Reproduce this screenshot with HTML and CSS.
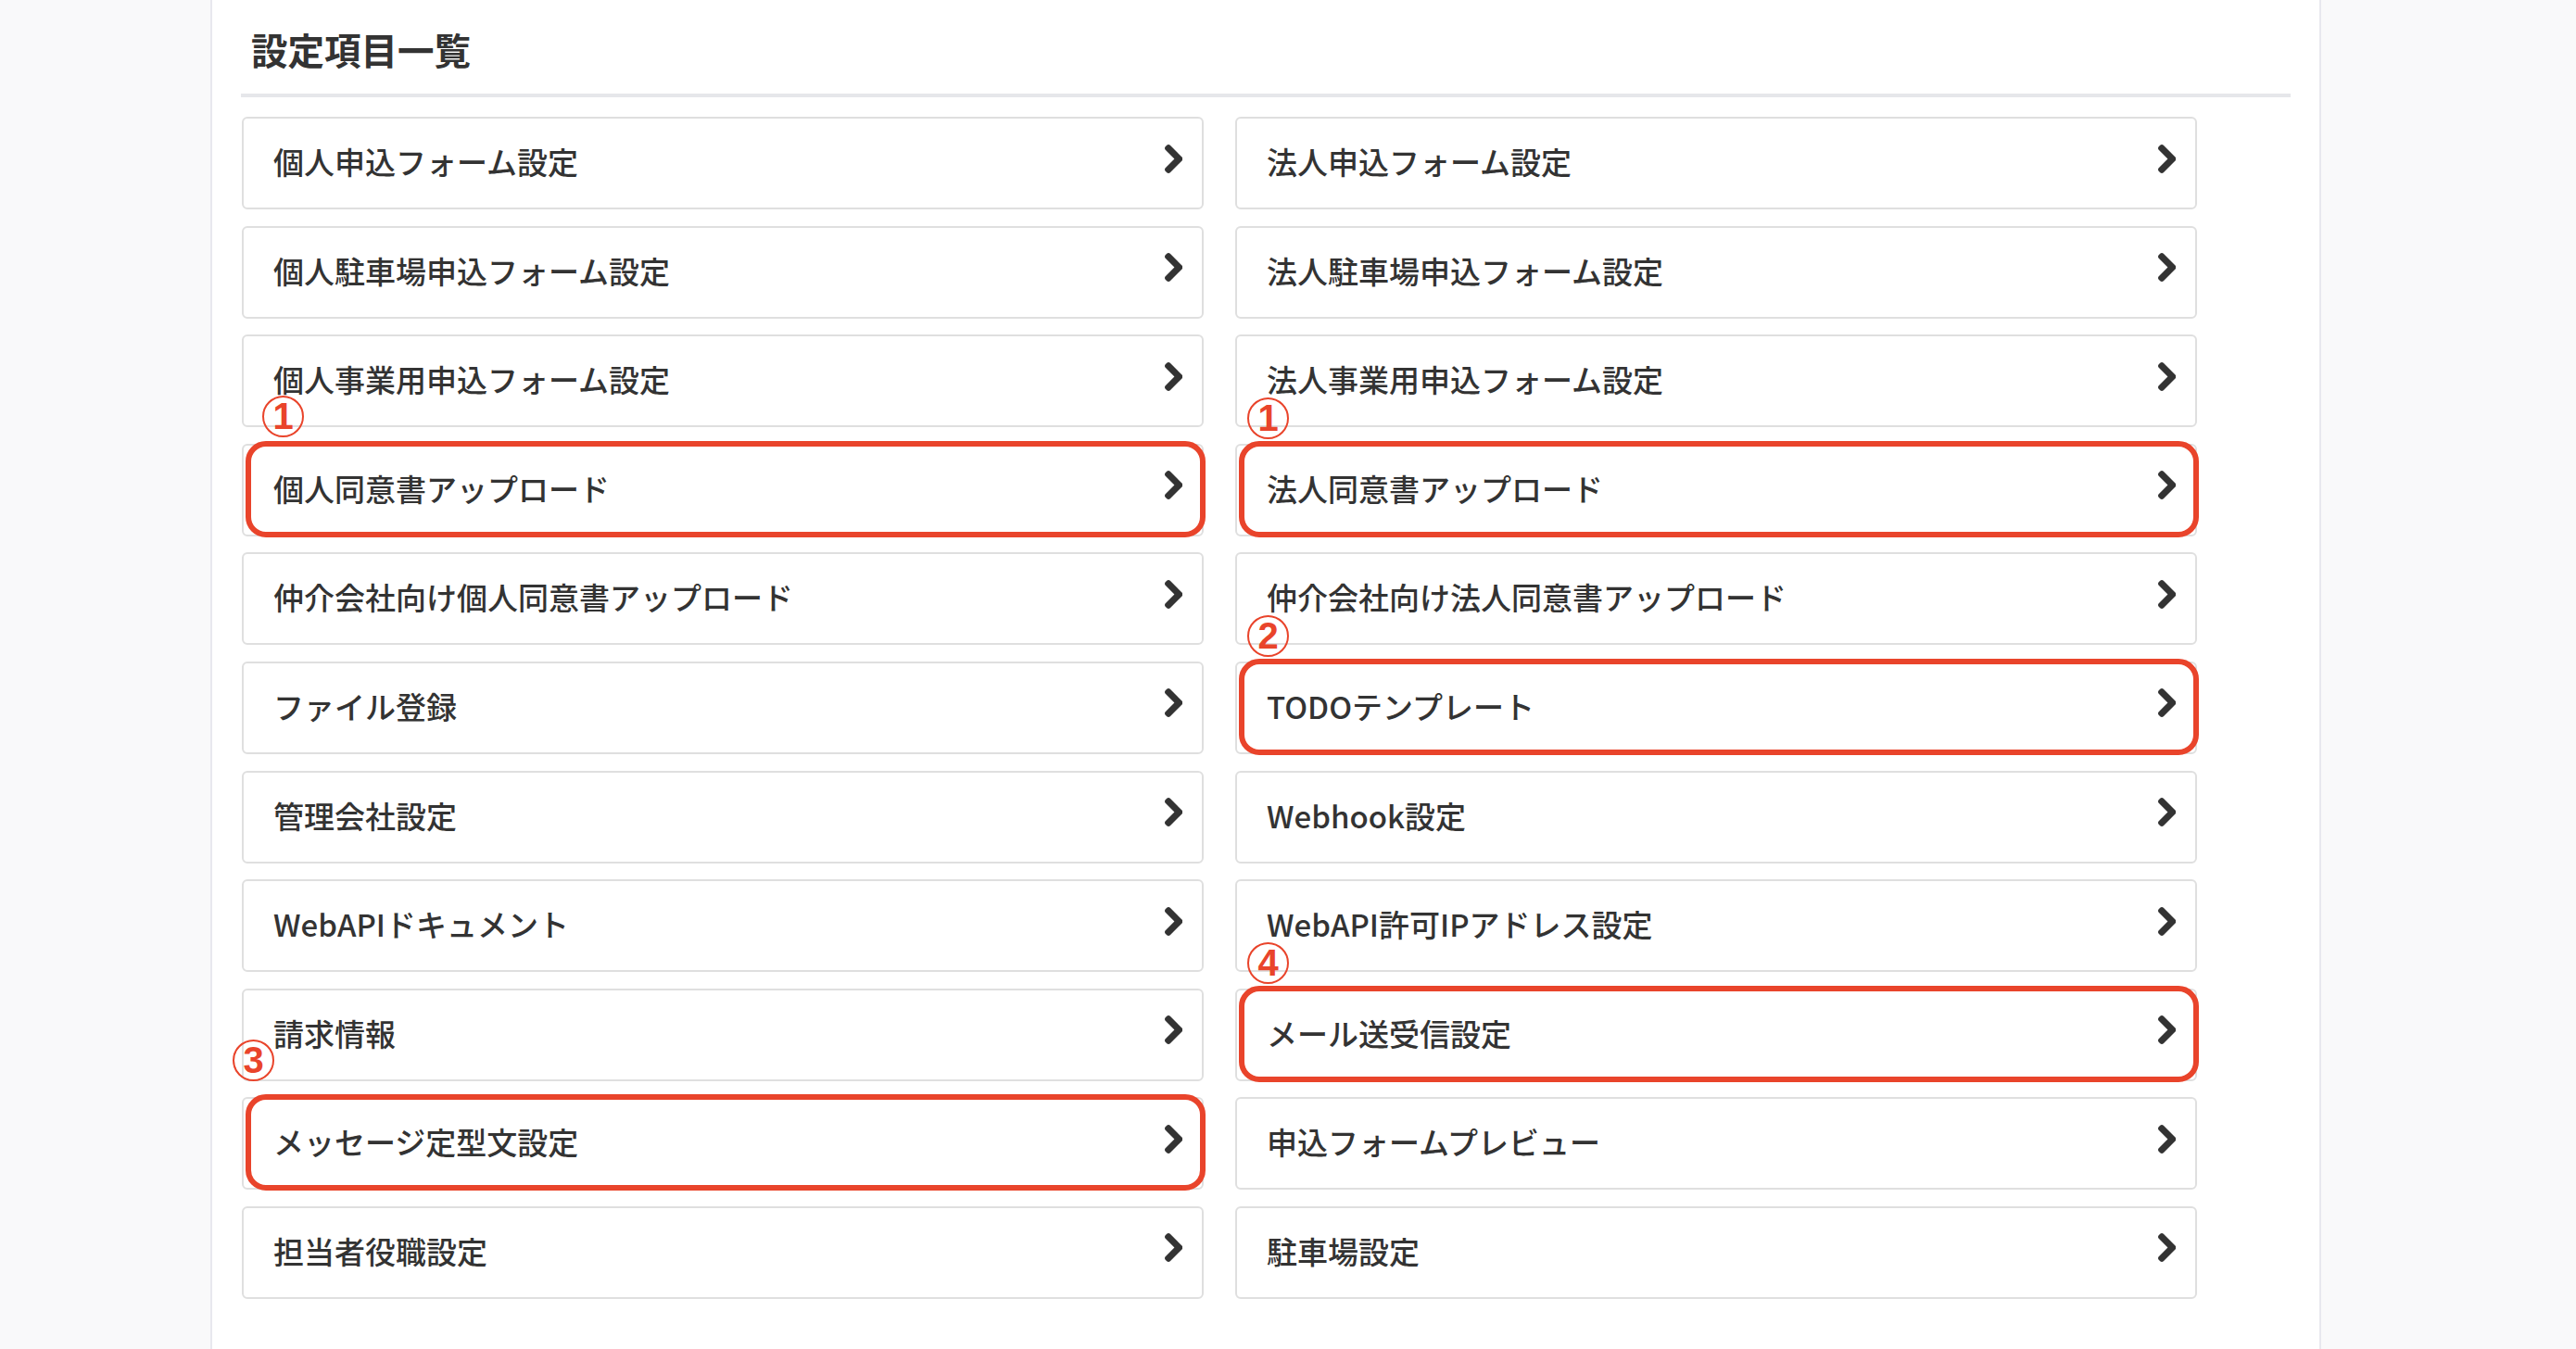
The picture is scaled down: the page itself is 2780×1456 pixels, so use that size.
FILE: index.html
```html
<!DOCTYPE html>
<html lang="ja">
<head>
    <meta charset="UTF-8">
    <meta name="viewport" content="width=device-width, initial-scale=1.0">
    <title>設定項目一覧</title>
    <link rel="stylesheet" href="styles.css">
</head>
<body>

    <!-- chevron used at the right end of every row -->
    <svg class="sprite" xmlns="http://www.w3.org/2000/svg">
        <symbol id="icon-chevron" viewBox="191 182 980 1556">
            <path d="M1171 960q0 53-37 90l-651 651q-37 37-90 37t-90-37l-75-75q-37-37-37-90 0-53 37-90l486-486-486-485q-37-38-37-91 0-53 37-90l75-75q37-37 90-37t90 37l651 651q37 37 37 90z"/>
        </symbol>
    </svg>

    <div class="panel">
        <h2 class="panel-title">設定項目一覧</h2>

        <div class="menu">
            <a class="menu-item" href="#">個人申込フォーム設定<svg class="chevron"><use href="#icon-chevron"/></svg></a>
            <a class="menu-item" href="#">法人申込フォーム設定<svg class="chevron"><use href="#icon-chevron"/></svg></a>

            <a class="menu-item" href="#">個人駐車場申込フォーム設定<svg class="chevron"><use href="#icon-chevron"/></svg></a>
            <a class="menu-item" href="#">法人駐車場申込フォーム設定<svg class="chevron"><use href="#icon-chevron"/></svg></a>

            <a class="menu-item" href="#">個人事業用申込フォーム設定<svg class="chevron"><use href="#icon-chevron"/></svg></a>
            <a class="menu-item" href="#">法人事業用申込フォーム設定<svg class="chevron"><use href="#icon-chevron"/></svg></a>

            <a class="menu-item marked" href="#"><span class="mark-no mark-no-wide">1</span>個人同意書アップロード<svg class="chevron"><use href="#icon-chevron"/></svg></a>
            <a class="menu-item marked" href="#"><span class="mark-no">1</span>法人同意書アップロード<svg class="chevron"><use href="#icon-chevron"/></svg></a>

            <a class="menu-item" href="#">仲介会社向け個人同意書アップロード<svg class="chevron"><use href="#icon-chevron"/></svg></a>
            <a class="menu-item" href="#">仲介会社向け法人同意書アップロード<svg class="chevron"><use href="#icon-chevron"/></svg></a>

            <a class="menu-item" href="#">ファイル登録<svg class="chevron"><use href="#icon-chevron"/></svg></a>
            <a class="menu-item marked" href="#"><span class="mark-no">2</span>TODOテンプレート<svg class="chevron"><use href="#icon-chevron"/></svg></a>

            <a class="menu-item" href="#">管理会社設定<svg class="chevron"><use href="#icon-chevron"/></svg></a>
            <a class="menu-item" href="#">Webhook設定<svg class="chevron"><use href="#icon-chevron"/></svg></a>

            <a class="menu-item" href="#">WebAPIドキュメント<svg class="chevron"><use href="#icon-chevron"/></svg></a>
            <a class="menu-item" href="#">WebAPI許可IPアドレス設定<svg class="chevron"><use href="#icon-chevron"/></svg></a>

            <a class="menu-item" href="#">請求情報<svg class="chevron"><use href="#icon-chevron"/></svg></a>
            <a class="menu-item marked" href="#"><span class="mark-no">4</span>メール送受信設定<svg class="chevron"><use href="#icon-chevron"/></svg></a>

            <a class="menu-item marked" href="#"><span class="mark-no mark-no-high">3</span>メッセージ定型文設定<svg class="chevron"><use href="#icon-chevron"/></svg></a>
            <a class="menu-item" href="#">申込フォームプレビュー<svg class="chevron"><use href="#icon-chevron"/></svg></a>

            <a class="menu-item" href="#">担当者役職設定<svg class="chevron"><use href="#icon-chevron"/></svg></a>
            <a class="menu-item" href="#">駐車場設定<svg class="chevron"><use href="#icon-chevron"/></svg></a>
        </div>
    </div>

</body>
</html>
```
FILE: styles.css
```css
body {
    margin: 0;
    background-color: #f9f9fa;
    font-family: "Noto Sans CJK JP", "Noto Sans", sans-serif;
    color: #333;
}
.sprite {
    position: absolute;
    width: 0;
    height: 0;
}
.panel {
    box-sizing: border-box;
    width: 2278px;
    min-height: 100vh;
    margin-left: 227px;
    padding: 28px 31px 40px;
    background-color: #fff;
    border-left: 2px solid #e8e8ee;
    border-right: 2px solid #e8e8ee;
}
.panel-title {
    margin: 0 0 21px;
    padding: 0 0 23px 11px;
    border-bottom: 4px solid #e6e7ea;
    font-size: 39.5px;
    line-height: 50px;
    font-weight: bold;
}
.menu {
    display: grid;
    grid-template-columns: 1fr 1fr;
    gap: 17.6px 34px;
    width: 2110px;
    margin-left: 1px;
}
.menu-item {
    position: relative;
    display: flex;
    align-items: center;
    justify-content: space-between;
    box-sizing: border-box;
    height: 100px;
    padding: 0 21px 4px 32px;
    background-color: #fff;
    border: 2px solid #dfdfdf;
    border-radius: 6px;
    color: #333;
    font-size: 33px;
    font-weight: 500;
    text-decoration: none;
}
.chevron {
    width: 19.5px;
    height: 31px;
    margin-bottom: 6px;
    fill: #333;
}
/* red frame + numbered circle drawn over the highlighted rows */
.marked::after {
    content: "";
    position: absolute;
    top: -5px;
    left: 2px;
    right: -4px;
    bottom: -3px;
    border: 6px solid #e9442b;
    border-radius: 22px;
    pointer-events: none;
}
.mark-no {
    position: absolute;
    left: 11px;
    top: -52px;
    box-sizing: border-box;
    width: 45px;
    height: 45px;
    border: 2px solid #e9442b;
    border-radius: 50%;
    color: #e9442b;
    font-family: "Liberation Sans", Arial, sans-serif;
    font-size: 40px;
    font-weight: bold;
    line-height: 41px;
    text-align: center;
}
.mark-no-wide {
    left: 20px;
    top: -54px;
}
.mark-no-high {
    left: -12px;
    top: -64px;
}
```
